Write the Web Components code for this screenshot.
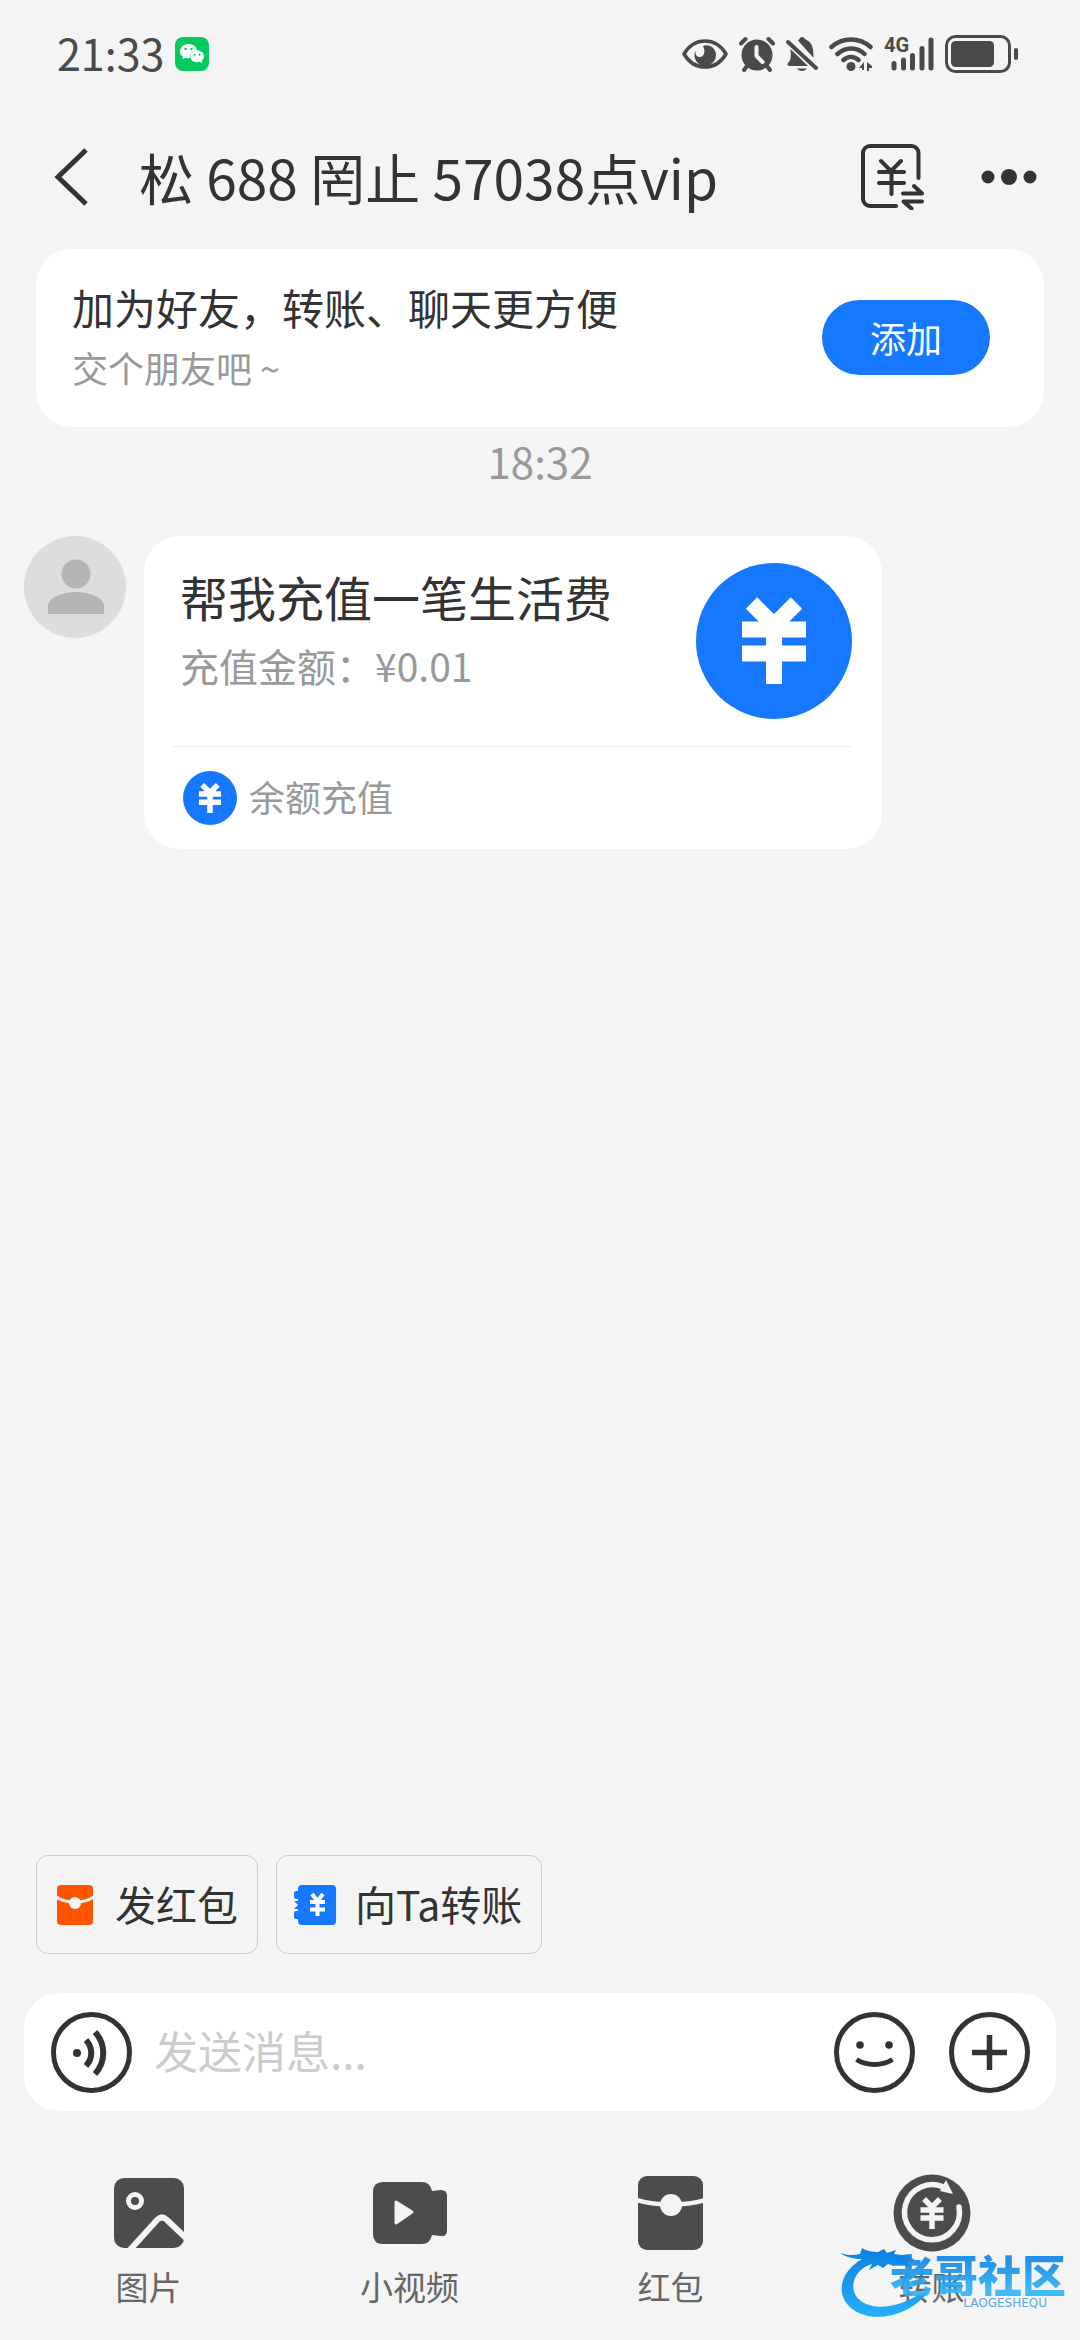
<!DOCTYPE html>
<html lang="zh-CN">
<head>
<meta charset="utf-8">
<meta name="viewport" content="width=device-width, initial-scale=1">
<title>聊天</title>
<style>
  html, body { margin: 0; background: #f4f4f4; }
  body {
    font-family: "Noto Sans CJK SC", sans-serif;
    font-weight: 400;
    color: #333;
    --ink: #333;
    --muted: #999;
    --blue: #1677ff;
  }
</style>
</head>
<body>
<chat-app></chat-app>
<script>
const define = (name, html) => {
  const template = document.createElement('template');
  template.innerHTML = `<style>
    :host { display: block; box-sizing: border-box; }
    * { box-sizing: border-box; }
    svg { display: block; flex: none; }
    button { margin: 0; padding: 0; border: 0; background: none; color: inherit; font: inherit; cursor: pointer; }
  </style>` + html;
  customElements.define(name, class extends HTMLElement {
    constructor() {
      super();
      this.attachShadow({ mode: 'open' }).append(template.content.cloneNode(true));
    }
  });
};

define('yen-badge', `
  <style>svg { width: 100%; height: 100%; }</style>
  <svg viewBox="0 0 156 156" aria-hidden="true">
    <circle cx="78" cy="78" r="78" fill="#1677ff"/>
    <path d="M55.500 40 78 62.500 100.500 40M46 66.500h64M46 90.500h64M78 60v61" fill="none" stroke="#fff" stroke-width="16"/>
  </svg>`);

define('status-bar', `
  <style>
    :host { display: flex; align-items: center; justify-content: space-between; height: 108px; padding: 0 61px 0 57px; color: #4a4a4a; }
    .left, .right { display: flex; align-items: center; }
    .left { gap: 11px; font-size: 43px; line-height: 60px; }
    .left span { padding-bottom: 4px; }
    .right { gap: 11px; }
    .net { position: relative; }
    .net span { position: absolute; left: 0; top: -3px; font: 700 20px/24px Roboto, sans-serif; }
  </style>
  <div class="left"><span>21:33</span>
    <svg width="34" height="34" viewBox="0 0 34 34"><rect width="34" height="34" rx="8" fill="#06c960"/>
      <path fill="#fff" d="M13.500 7C8.800 7 5 10.200 5 14.200c0 2.300 1.200 4.200 3.100 5.500l-.6 2.500 3-1.500c1.700.5 3 .6 4.600.4-.9-4.600 2.700-7.800 6.900-7.900C21.500 9.700 18 7 13.500 7z"/>
      <path fill="#fff" d="M22 13.500c-4 0-6.700 2.600-6.700 5.800s3 5.900 6.700 5.900c.9 0 1.800-.2 2.600-.5l2.500 1.500-.6-2.300c1.600-1.100 2.500-2.700 2.500-4.600 0-3.200-3-5.800-7-5.800z"/>
      <g fill="#06c960"><circle cx="10.500" cy="12" r="1.200"/><circle cx="16.500" cy="12" r="1.200"/><circle cx="19.500" cy="17.800" r="1"/><circle cx="24.500" cy="17.800" r="1"/></g></svg>
  </div>
  <div class="right">
    <svg width="46" height="34" viewBox="0 0 46 34"><path d="M2 17C7 8.500 14 4 23 4s16 4.500 21 13c-5 8.500-12 13-21 13S7 25.500 2 17z" fill="none" stroke="currentColor" stroke-width="3.500" stroke-linejoin="round"/><path d="M21 9c6-2.500 13 2 13 9 0 6-5 11-11 11s-10.500-5-10.500-11c0-1.500.2-3 .8-4.500 0 5 2 6.500 4.700 6.500 4 0 6-6 3-11z" fill="currentColor"/></svg>
    <svg width="36" height="36" viewBox="0 0 36 36" fill="none" stroke="currentColor" stroke-linecap="round"><circle cx="18" cy="19" r="15.500" fill="currentColor" stroke="none"/><path d="M2 7.500 6.500 3M29.500 3 34 7.500M8 30l-3 4M28 30l3 4" stroke-width="4"/><path d="M17.500 11v9l6 6" stroke="#f4f4f4" stroke-width="4"/></svg>
    <svg width="32" height="36" viewBox="0 0 32 36" fill="currentColor"><path d="M12 4.500C14 3 14 1 16 1s2.500 2 4.500 3c5 2.500 7 7 7 16v2zM4.500 13 22 30H3c-2 0-2-3 0-4 2-2 2-7 1.500-13zM11 32.500h10c-2 3.300-8 3.300-10 0z"/><path d="M2 6l28 26" stroke="currentColor" stroke-width="4" stroke-linecap="round"/><path d="M7 4.500l23 21.500" stroke="#f4f4f4" stroke-width="3"/></svg>
    <svg width="44" height="36" viewBox="0 0 44 36" fill="none" stroke="currentColor" stroke-width="4.500" stroke-linecap="round"><path d="M2.500 11c11-10 28-10 39 0M8.500 18c8-7.500 19.500-7.500 27 0M14.500 24c4.500-4 10.500-4 15 0"/><circle cx="22" cy="30.500" r="4.500" fill="currentColor" stroke="none"/><path d="M30 32l5-6v8h-2v-2zM38 26l5 4v2h-3v3h-2z" fill="currentColor" stroke="none"/></svg>
    <div class="net"><span>4G</span>
      <svg width="50" height="36" viewBox="0 0 50 36" stroke="currentColor" stroke-width="5" stroke-linecap="round"><path d="M10 27.500V32M19.500 24V32M28.500 19.500V32M38 12.500V32M47 4V32"/></svg></div>
    <svg width="74" height="38" viewBox="0 0 74 38"><rect x="1.500" y="1.500" width="63" height="35" rx="9" fill="none" stroke="currentColor" stroke-width="3"/><rect x="6" y="6" width="43" height="26" rx="4.500" fill="currentColor"/><rect x="69" y="13" width="4" height="12" rx="2" fill="currentColor"/></svg>
  </div>`);

define('nav-bar', `
  <style>
    :host { display: flex; align-items: center; height: 141px; padding: 0 43px 3px 52px; }
    h1 { flex: 1; margin: 0 0 0 49px; padding-bottom: 3px; font-size: 55px; line-height: 72px; font-weight: inherit; white-space: nowrap; }
    .actions { display: flex; align-items: center; gap: 56px; }
  </style>
  <button aria-label="返回"><svg width="38" height="58" viewBox="0 0 38 58"><path d="M34 2 6 29l28 27" fill="none" stroke="#333" stroke-width="5"/></svg></button>
  <h1><slot></slot></h1>
  <div class="actions">
    <button aria-label="转账"><svg width="64" height="66" viewBox="0 0 64 66" fill="none" stroke="#333" stroke-width="4" stroke-linecap="round" stroke-linejoin="round"><path d="M57.500 34V9a7 7 0 0 0-7-7H9a7 7 0 0 0-7 7v46a7 7 0 0 0 7 7h26"/><path d="M20 17l10 10 10-10M18 28h25M18 39h25M30.500 27v23M42 49.500h19l-8-7.500M61 57.500H42.500l8 7" /></svg></button>
    <button aria-label="更多"><svg width="56" height="18" viewBox="0 0 56 18" fill="#333"><circle cx="7" cy="9" r="6.500"/><circle cx="28" cy="9" r="8"/><circle cx="49" cy="9" r="6.500"/></svg></button>
  </div>`);

define('friend-banner', `
  <style>
    :host { display: flex; align-items: center; justify-content: space-between; margin: 0 36px; padding: 28px 54px 30px 36px; border-radius: 36px; background: #fff; }
    p { margin: 0; line-height: 60px; }
    .title { font-size: 42px; }
    .sub { font-size: 36px; color: var(--muted); }
    button { width: 168px; height: 75px; border-radius: 38px; background: var(--blue); color: #fff; font-size: 36px; }
  </style>
  <div><p class="title"><slot name="title"></slot></p><p class="sub"><slot name="sub"></slot></p></div>
  <button>添加</button>`);

define('recharge-card', `
  <style>
    :host { display: flex; align-items: flex-start; gap: 18px; padding: 0 24px; }
    .avatar { width: 102px; height: 102px; }
    article { flex: 0 1 738px; border-radius: 36px; background: #fff; }
    .top { display: flex; justify-content: space-between; padding: 27px 30px 27px 36px; }
    h2, p { margin: 0; font-weight: inherit; }
    h2 { font-size: 48px; line-height: 66px; }
    p { font-size: 39px; line-height: 72px; color: var(--muted); }
    .big { width: 156px; height: 156px; }
    .foot { display: flex; align-items: center; gap: 12px; height: 103px; margin: 0 30px 0 28px; padding-left: 11px; border-top: 1px solid #ececec; font-size: 36px; color: var(--muted); }
    .foot span { padding-bottom: 4px; }
    .small { width: 54px; height: 54px; }
  </style>
  <svg class="avatar" viewBox="0 0 102 102"><circle cx="51" cy="51" r="51" fill="#ddd"/><g fill="#b5b5b5"><circle cx="52" cy="38" r="14.500"/><path d="M24 78v-8c0-8 14-14 28-14s28 6 28 14v8z"/></g></svg>
  <article>
    <div class="top"><div><h2><slot name="title"></slot></h2><p><slot name="amount"></slot></p></div><yen-badge class="big"></yen-badge></div>
    <div class="foot"><yen-badge class="small"></yen-badge><span><slot name="source"></slot></span></div>
  </article>`);

define('quick-chip', `
  <style>
    button { display: flex; align-items: center; gap: 19px; height: 99px; padding: 0 19px 0 17px; border: 1px solid #ccc; border-radius: 12px; font-size: 41px; white-space: nowrap; }
    .icon { display: flex; justify-content: center; width: 42px; }
    .label { padding-bottom: 4px; }
  </style>
  <button><span class="icon"><slot name="icon"></slot></span><span class="label"><slot></slot></span></button>`);

define('message-bar', `
  <style>
    :host { display: flex; align-items: center; height: 118px; margin: 0 24px; padding: 0 26px 0 27px; border-radius: 36px; background: #fff; }
    input { flex: 1; min-width: 0; margin: 0 22px; padding: 0 0 4px; border: 0; outline: 0; background: none; font: inherit; font-size: 44px; line-height: 66px; color: var(--ink); }
    input::placeholder { color: #ccc; opacity: 1; }
    .right { display: flex; gap: 34px; }
    svg { width: 81px; height: 81px; fill: none; stroke: #333; stroke-width: 5px; }
  </style>
  <button aria-label="语音"><svg viewBox="0 0 81 81"><circle cx="40.500" cy="40.500" r="38"/><circle cx="26" cy="41" r="4" fill="#333" stroke="none"/><path d="M35 28c7 8 7 18 0 26M44 20c11 12 11 30 0 42" stroke-width="6"/></svg></button>
  <input type="text" aria-label="发送消息" placeholder="发送消息...">
  <div class="right">
    <button aria-label="表情"><svg viewBox="0 0 81 81"><circle cx="40.500" cy="40.500" r="38"/><circle cx="26" cy="33" r="3.800" fill="#333" stroke="none"/><circle cx="55" cy="33" r="3.800" fill="#333" stroke="none"/><path d="M22.500 47.500c10 6.500 26 6.500 36 0"/></svg></button>
    <button aria-label="更多功能"><svg viewBox="0 0 81 81"><circle cx="40.500" cy="40.500" r="38"/><path d="M23 40.500h35M40.500 23v35" stroke-width="5.500"/></svg></button>
  </div>`);

define('tool-item', `
  <style>
    :host { flex: 1; }
    button { display: flex; flex-direction: column; align-items: center; gap: 10px; width: 100%; font-size: 33px; line-height: 48px; color: #666; }
    .icon { display: flex; align-items: center; height: 78px; }
  </style>
  <button><span class="icon"><slot name="icon"></slot></span><slot></slot></button>`);

define('community-mark', `
  <style>
    :host { position: absolute; right: 14px; bottom: 20px; display: flex; align-items: flex-end; width: 226px; height: 76px; pointer-events: none; }
    .dragon { position: absolute; left: 0; top: 0; }
    .words { position: relative; display: flex; flex-direction: column; align-items: flex-end; margin-left: auto; padding-bottom: 10px; white-space: nowrap; }
    b { font-size: 44px; line-height: 44px; font-weight: 900; color: transparent; background: linear-gradient(#0f86e6 20%, #2fb4f8 90%); background-clip: text; -webkit-background-clip: text; opacity: .9; }
    small { margin-right: 19px; font: 12px/14px "DejaVu Sans", sans-serif; color: #5aa9e0; }
  </style>
  <svg class="dragon" width="96" height="78" viewBox="0 0 96 78">
    <defs><linearGradient id="sea" x1="0" y1="0" x2="0" y2="1"><stop offset="0" stop-color="#0c7fe2"/><stop offset="1" stop-color="#25b0fa"/></linearGradient></defs>
    <path fill="url(#sea)" d="M0 9c6 2 13 3 20 1l2-6c5 3 10 4 16 4l6-3 3 4 9-3-2 4 8 1 10-1-3 4 6 1-8 3 5 5-11-3-7 2-6-2-5 4-5-3-9 5 3-6C19 23 8 38 16 52c9 13 34 16 64-2l10-5C76 66 50 76 28 72 2 66-5 44 8 27c5-6 9-9 14-12C14 15 6 13 0 9z"/>
  </svg>
  <div class="words"><b>老哥社区</b><small>LAOGESHEQU</small></div>`);

define('chat-app', `
  <style>
    :host { display: flex; flex-direction: column; position: relative; min-height: 100vh; overflow: hidden; }
    main { flex: 1; }
    time { display: block; margin-bottom: 41px; text-align: center; font-size: 42px; line-height: 68px; color: var(--muted); }
    .chips { display: flex; gap: 18px; padding: 0 36px 39px; }
    nav { display: flex; padding: 63px 18px 30px; }
  </style>
  <status-bar></status-bar>
  <nav-bar>松 688 罔止 57038点vip</nav-bar>
  <main>
    <friend-banner><span slot="title">加为好友，转账、聊天更方便</span><span slot="sub">交个朋友吧 ~</span></friend-banner>
    <time>18:32</time>
    <recharge-card><span slot="title">帮我充值一笔生活费</span><span slot="amount">充值金额：¥0.01</span><span slot="source">余额充值</span></recharge-card>
  </main>
  <div class="chips">
    <quick-chip><svg slot="icon" width="36" height="40" viewBox="0 0 36 40"><rect width="36" height="40" rx="4" fill="#ff5500"/><path d="M-1 12c11 7 27 7 38 0" fill="none" stroke="#f4f4f4" stroke-width="3"/><circle cx="18" cy="18" r="6" fill="#f4f4f4"/></svg>发红包</quick-chip>
    <quick-chip><svg slot="icon" width="42" height="40" viewBox="0 0 42 40"><rect x="4" width="38" height="40" rx="4" fill="#1677ff"/><path d="M2 6h6v8H2a2 2 0 0 1-2-2V8a2 2 0 0 1 2-2zM0 16h8v8H0l4-4zM2 26h6v8H2a2 2 0 0 1-2-2v-4a2 2 0 0 1 2-2z" fill="#1677ff"/><path d="M18 9l5.500 7L29 9M16 17h15M16 24.500h15M23.500 16v15" fill="none" stroke="#fff" stroke-width="4"/></svg>向Ta转账</quick-chip>
  </div>
  <message-bar></message-bar>
  <nav aria-label="工具">
    <tool-item><svg slot="icon" width="70" height="70" viewBox="0 0 70 70"><rect width="70" height="70" rx="10" fill="#4c4c4c"/><circle cx="21" cy="23" r="6.500" fill="none" stroke="#f4f4f4" stroke-width="5"/><path d="M15 73 43 42q5-5 10 0l19 18" fill="none" stroke="#f4f4f4" stroke-width="6"/></svg>图片</tool-item>
    <tool-item><svg slot="icon" width="74" height="62" viewBox="0 0 74 62"><path d="M10 0h39q8 0 10 9l9-1q6 0 6 6v34q0 7-6 6l-9-1q-2 9-10 9H10Q0 62 0 52V10Q0 0 10 0z" fill="#4c4c4c"/><path d="M23 20l16 10-16 11z" fill="#f4f4f4" stroke="#f4f4f4" stroke-width="3" stroke-linejoin="round"/></svg>小视频</tool-item>
    <tool-item><svg slot="icon" width="66" height="74" viewBox="0 0 66 74"><rect width="65" height="74" rx="9" fill="#4c4c4c"/><path d="M-1 24c20 6 48 6 68 0" fill="none" stroke="#f4f4f4" stroke-width="4.500"/><circle cx="33" cy="29" r="11" fill="#f4f4f4"/></svg>红包</tool-item>
    <tool-item><svg slot="icon" width="78" height="78" viewBox="0 0 78 78"><circle cx="39" cy="39" r="38.500" fill="#4c4c4c"/><path d="M66 33A27.500 27.500 0 1 1 52 14" fill="none" stroke="#f4f4f4" stroke-width="5.500" stroke-linecap="round"/><path d="M53 6l7 14-13-3z" fill="#f4f4f4"/><path d="M31 25l8 8 8-8M27.500 36h23M27.500 44h23M39 33v22" fill="none" stroke="#f4f4f4" stroke-width="5.500"/></svg>转账</tool-item>
  </nav>
  <community-mark></community-mark>`);
</script>
</body>
</html>
